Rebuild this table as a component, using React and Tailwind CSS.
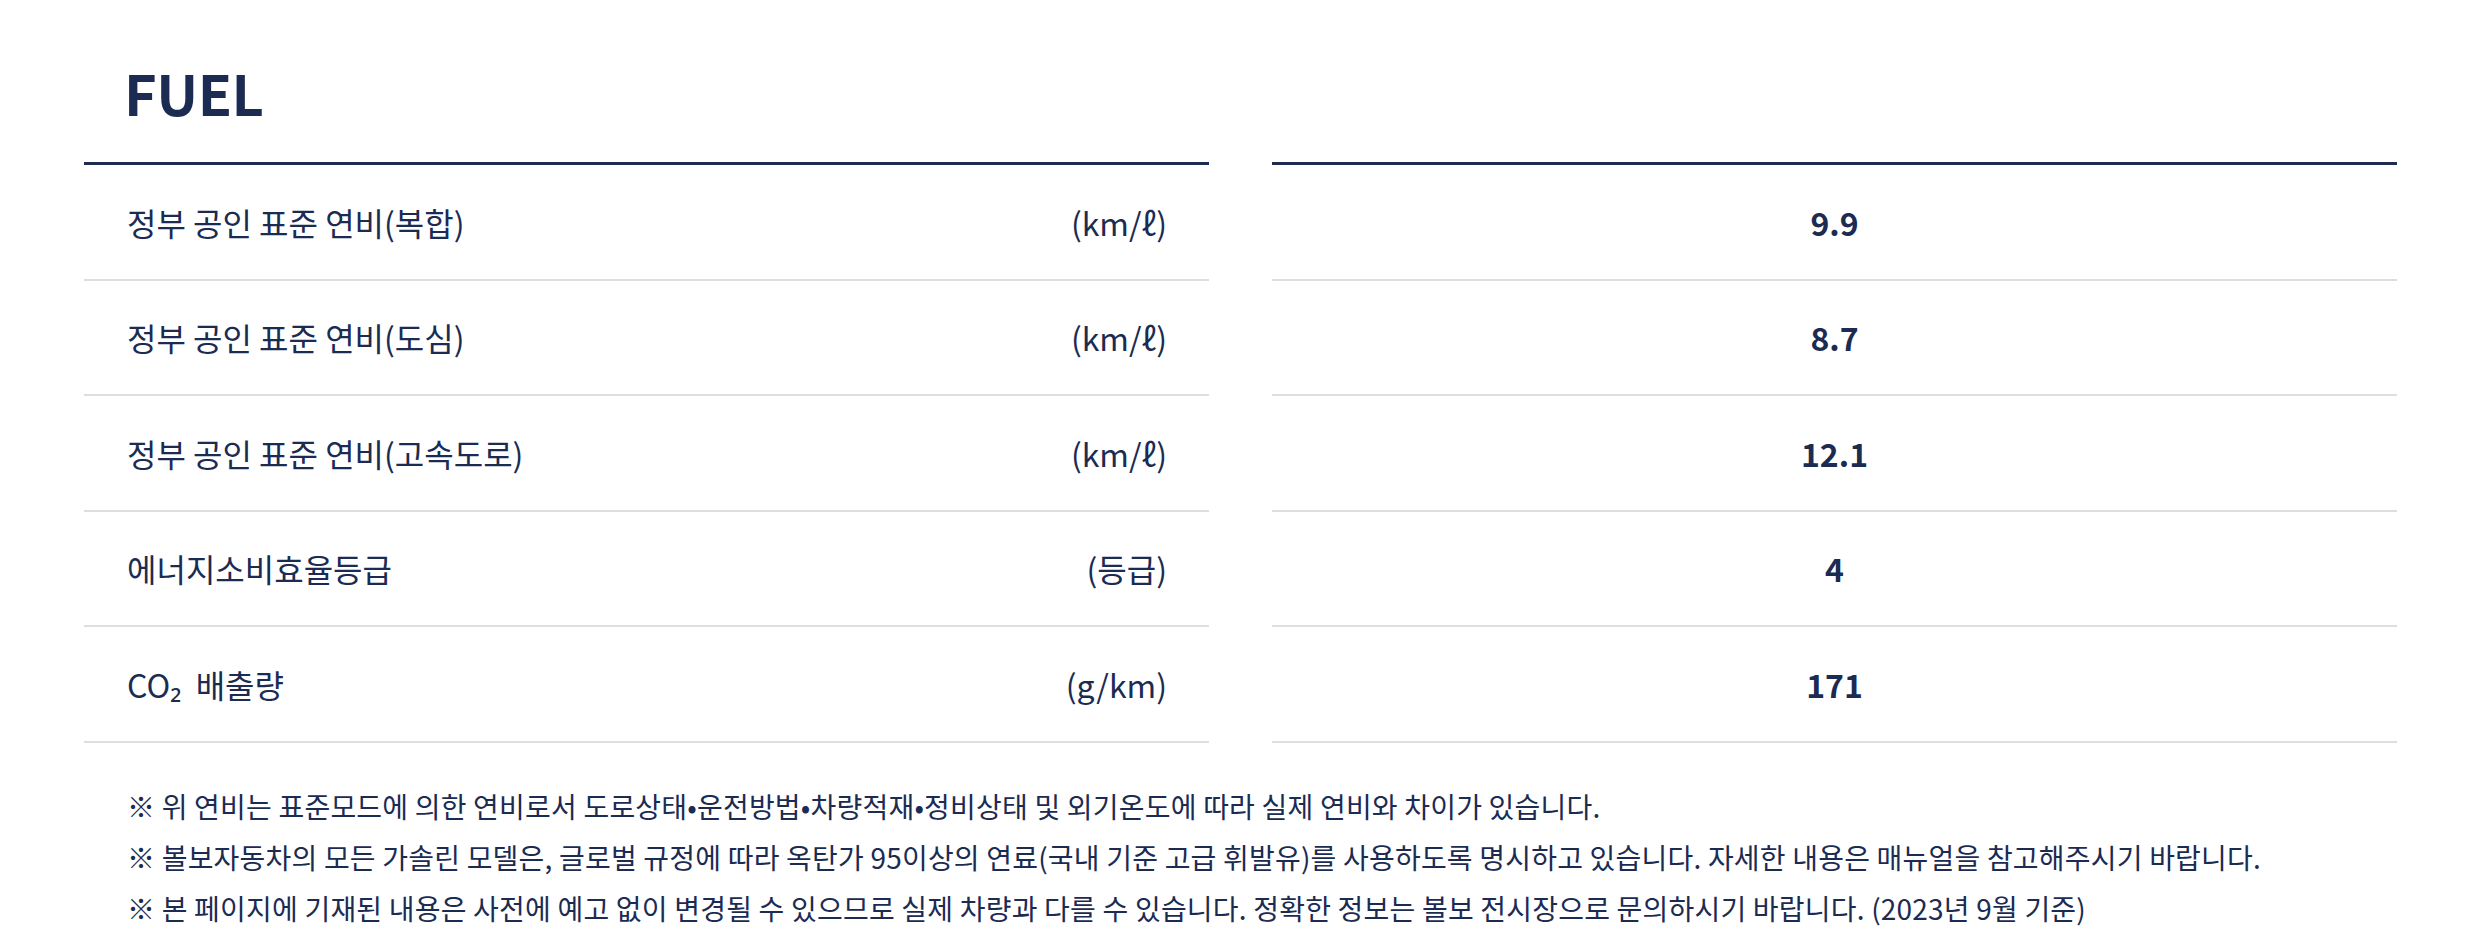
const ROWS = [
  { label: "정부 공인 표준 연비(복합)", unit: "(km/ℓ)", value: "9.9" },
  { label: "정부 공인 표준 연비(도심)", unit: "(km/ℓ)", value: "8.7" },
  { label: "정부 공인 표준 연비(고속도로)", unit: "(km/ℓ)", value: "12.1" },
  { label: "에너지소비효율등급", unit: "(등급)", value: "4" },
  { label: "CO₂  배출량", unit: "(g/km)", value: "171" },
];

const NOTES = [
  "※ 위 연비는 표준모드에 의한 연비로서 도로상태•운전방법•차량적재•정비상태 및 외기온도에 따라 실제 연비와 차이가 있습니다.",
  "※ 볼보자동차의 모든 가솔린 모델은, 글로벌 규정에 따라 옥탄가 95이상의 연료(국내 기준 고급 휘발유)를 사용하도록 명시하고 있습니다. 자세한 내용은 매뉴얼을 참고해주시기 바랍니다.",
  "※ 본 페이지에 기재된 내용은 사전에 예고 없이 변경될 수 있으므로 실제 차량과 다를 수 있습니다. 정확한 정보는 볼보 전시장으로 문의하시기 바랍니다. (2023년 9월 기준)",
];

export default function App() {
  return (
    <div
      className="min-h-[952px] bg-white px-[84px] text-[#1b2b52]"
      style={{ fontFamily: '"Noto Sans CJK KR", "Noto Sans", sans-serif' }}
    >
      <h2 className="pl-[40px] pt-[52px] pb-[30px] text-[56px] font-bold leading-[80px] tracking-[-0.5px]">
        FUEL
      </h2>

      <div className="grid grid-cols-2 gap-[63px]">
        <div className="border-t-[3px] border-[#1e2c4f]">
          {ROWS.map((r) => (
            <div
              key={r.label}
              className="flex h-[115.5px] items-center justify-between border-b-2 border-[#dedede] pl-[43px] pr-[42px] text-[32px] font-normal"
            >
              <span className="whitespace-pre">{r.label}</span>
              <span>{r.unit}</span>
            </div>
          ))}
        </div>
        <div className="border-t-[3px] border-[#1e2c4f]">
          {ROWS.map((r) => (
            <div
              key={r.label}
              className="flex h-[115.5px] items-center justify-center border-b-2 border-[#dedede] text-[32px] font-bold"
            >
              {r.value}
            </div>
          ))}
        </div>
      </div>

      <div className="pl-[43px] pt-[38px] text-[28px] leading-[51px] tracking-[0.2px]">
        {NOTES.map((n) => (
          <p key={n}>{n}</p>
        ))}
      </div>
    </div>
  );
}
